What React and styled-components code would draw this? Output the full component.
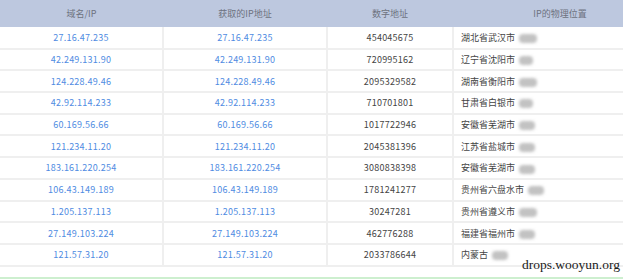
import React from 'react';
import styled, { createGlobalStyle } from 'styled-components';

const GlobalStyle = createGlobalStyle`
  html, body {
    margin: 0;
    padding: 0;
    background: #fff;
  }
  body {
    font-family: "Noto Sans CJK SC", "Noto Sans", sans-serif;
  }
`;

const rows = [
  ['27.16.47.235', '454045675', '湖北省武汉市', 18],
  ['42.249.131.90', '720995162', '辽宁省沈阳市', 14],
  ['124.228.49.46', '2095329582', '湖南省衡阳市', 18],
  ['42.92.114.233', '710701801', '甘肃省白银市', 14],
  ['60.169.56.66', '1017722946', '安徽省芜湖市', 16],
  ['121.234.11.20', '2045381396', '江苏省盐城市', 16],
  ['183.161.220.254', '3080838398', '安徽省芜湖市', 16],
  ['106.43.149.189', '1781241277', '贵州省六盘水市', 16],
  ['1.205.137.113', '30247281', '贵州省遵义市', 18],
  ['27.149.103.224', '462776288', '福建省福州市', 16],
  ['121.57.31.20', '2033786644', '内蒙古', 16],
];

const Page = styled.div`
  position: relative;
  width: 623px;
  height: 279px;
  overflow: hidden;
  background: #fff;
`;

const Table = styled.table`
  width: 623px;
  border-collapse: collapse;
  table-layout: fixed;
  font-size: 9px;
`;

const Th = styled.th`
  height: 27px;
  padding: ${p => (p.$shift ? '0 0 0 44px' : '0')};
  background: #bdc8df;
  color: #6d7280;
  font-weight: normal;
  text-align: center;
`;

const Tr = styled.tr`
  height: 21.7px;
  border-bottom: 2px solid #efefef;
`;

const Td = styled.td`
  padding: ${p => (p.$left ? '0 0 0 7px' : '0')};
  text-align: ${p => (p.$left ? 'left' : 'center')};
  color: ${p => (p.$link ? '#4f8ce2' : '#444')};
  letter-spacing: ${p => (p.$left ? '0' : '0.25px')};
  border-right: 2px solid #efefef;
  white-space: nowrap;
  &:last-child {
    border-right: none;
  }
`;

const Blur = styled.span`
  display: inline-block;
  vertical-align: middle;
  margin-left: 4px;
  height: 9px;
  border-radius: 4px;
  background: #c2c2c2;
  filter: blur(1.5px);
`;

const Footer = styled.div`
  position: absolute;
  left: 0;
  right: 0;
  bottom: 0;
  height: 2px;
  background: #cdefcf;
`;

const Watermark = styled.div`
  position: absolute;
  right: 3px;
  top: 257px;
  font-family: "Liberation Serif", serif;
  font-size: 13.5px;
  color: #1a1a1a;
`;

export default function App() {
  return (
    <Page>
      <GlobalStyle />
      <Table>
        <colgroup>
          <col style={{ width: 163 }} />
          <col style={{ width: 164 }} />
          <col style={{ width: 126 }} />
          <col style={{ width: 170 }} />
        </colgroup>
        <thead>
          <tr>
            <Th>域名/IP</Th>
            <Th>获取的IP地址</Th>
            <Th>数字地址</Th>
            <Th $shift>IP的物理位置</Th>
          </tr>
        </thead>
        <tbody>
          {rows.map(([ip, num, city, w]) => (
            <Tr key={ip + num}>
              <Td $link>{ip}</Td>
              <Td $link>{ip}</Td>
              <Td>{num}</Td>
              <Td $left>
                {city}
                <Blur style={{ width: w }} />
              </Td>
            </Tr>
          ))}
        </tbody>
      </Table>
      <Watermark>drops.wooyun.org</Watermark>
      <Footer />
    </Page>
  );
}
